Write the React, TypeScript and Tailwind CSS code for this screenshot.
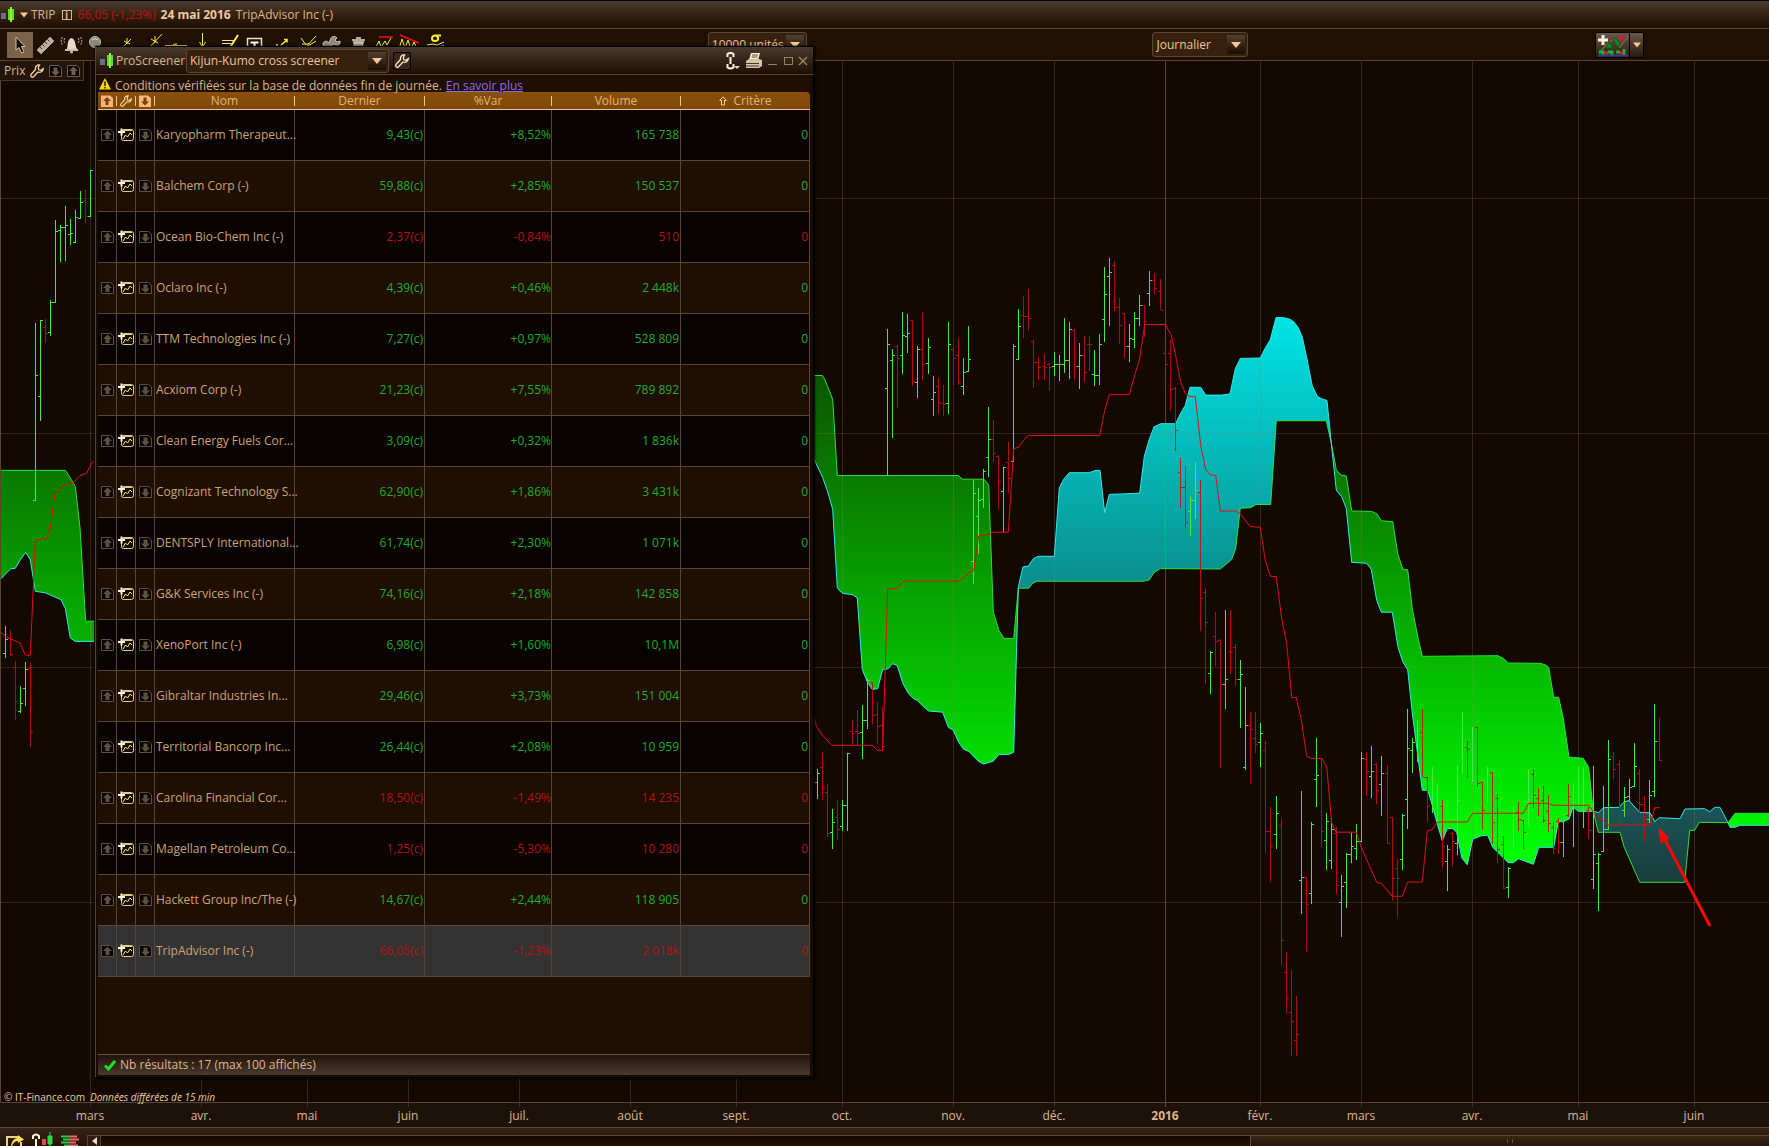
import * as React from 'react';

type Row = {
    name: string;
    last: string;
    change: string;
    volume: string;
    down?: boolean;
    selected?: boolean;
};

const rows: Row[] = [
    { name: 'Karyopharm Therapeut...', last: '9,43(c)', change: '+8,52%', volume: '165 738' },
    { name: 'Balchem Corp (-)', last: '59,88(c)', change: '+2,85%', volume: '150 537' },
    { name: 'Ocean Bio-Chem Inc (-)', last: '2,37(c)', change: '-0,84%', volume: '510', down: true },
    { name: 'Oclaro Inc (-)', last: '4,39(c)', change: '+0,46%', volume: '2 448k' },
    { name: 'TTM Technologies Inc (-)', last: '7,27(c)', change: '+0,97%', volume: '528 809' },
    { name: 'Acxiom Corp (-)', last: '21,23(c)', change: '+7,55%', volume: '789 892' },
    { name: 'Clean Energy Fuels Cor...', last: '3,09(c)', change: '+0,32%', volume: '1 836k' },
    { name: 'Cognizant Technology S...', last: '62,90(c)', change: '+1,86%', volume: '3 431k' },
    { name: 'DENTSPLY International...', last: '61,74(c)', change: '+2,30%', volume: '1 071k' },
    { name: 'G&K Services Inc (-)', last: '74,16(c)', change: '+2,18%', volume: '142 858' },
    { name: 'XenoPort Inc (-)', last: '6,98(c)', change: '+1,60%', volume: '10,1M' },
    { name: 'Gibraltar Industries In...', last: '29,46(c)', change: '+3,73%', volume: '151 004' },
    { name: 'Territorial Bancorp Inc...', last: '26,44(c)', change: '+2,08%', volume: '10 959' },
    { name: 'Carolina Financial Cor...', last: '18,50(c)', change: '-1,49%', volume: '14 235', down: true },
    { name: 'Magellan Petroleum Co...', last: '1,25(c)', change: '-5,30%', volume: '10 280', down: true },
    { name: 'Hackett Group Inc/The (-)', last: '14,67(c)', change: '+2,44%', volume: '118 905' },
    { name: 'TripAdvisor Inc (-)', last: '66,05(c)', change: '-1,23%', volume: '2 018k', down: true, selected: true },
];

// The series is stored in segments, each with its own origin and scale
type Segment = { x: number; y: number; ky: number };
const A: Segment = { x: 0, y: 160, ky: 2.613 };
const B: Segment = { x: 800, y: 240, ky: 2.45 };
const C: Segment = { x: 1150, y: 280, ky: 2.45 };
const D: Segment = { x: 1400, y: 640, ky: 3 };
const E: Segment = { x: 1200, y: 780, ky: 3 };

const px = (s: Segment, x: number) => Math.round((s.x + x / 3) * 10) / 10;
const py = (s: Segment, y: number) => Math.round((s.y + y / s.ky) * 10) / 10;

const line = (s: Segment, data: string) =>
    data
        .split(' ')
        .map((p) => {
            const [x, y] = p.split(',').map(Number);
            return `${px(s, x)},${py(s, y)}`;
        })
        .join(' ');

// high, low, open tick on the left, close tick on the right
const bars = (s: Segment, data: string) =>
    data
        .split(' ')
        .map((b) => {
            const [x, hi, lo, open, close] = b.split(',').map(Number);
            const cx = Math.floor(px(s, x)) + 0.5;
            let d = `M${cx} ${py(s, hi)}V${py(s, lo)}`;
            if (open) d += `M${cx - 2.5} ${Math.floor(py(s, open)) + 0.5}h2.5`;
            if (close) d += `M${cx} ${Math.floor(py(s, close)) + 0.5}h2.5`;
            return d;
        })
        .join('');

const upBars = [
    bars(A, '106,427,891,889,563 121,417,682,618,419 151,366,459,451,372 166,157,372,372,187 181,170,266,184,176 196,119,264,176,170 211,154,223,194,192 226,131,216,215,150 241,82,154,153,110 271,26,147,147,26 16,1218,1300,1290,1252 61,1375,1446,1441,1420 76,1312,1427,1380,1330'),
    bars(B, '52,1295,1370,1328,1308 97,1395,1493,1452,1427 127,1373,1448,1438,1386 142,1257,1447,1386,1257 187,1138,1271,1206,1178 202,1073,1197,1178,1080 262,217,577,364,255 277,268,484,296,282 307,177,327,283,234 322,182,276,236,229 352,260,387,348,268 385,239,327,302,263 400,332,430,391,373 445,201,427,400,256 490,290,379,360,325 505,211,322,322,293 520,587,842,787,620 535,608,768,677,638 550,560,657,635,568 565,409,580,533,488 610,556,716,616,558 640,255,544,542,262 655,170,293,292,212 763,275,332,310,305 778,282,346,305,305 793,192,325,305,295 808,202,340,296,220 838,252,364,310,282 883,270,358,330,333 898,230,355,333,255 913,67,250,195,134 928,43,210,90,80 988,206,299,262,240 1003,177,265,243,193 1018,135,210,192,160 1048,76,162,130,98'),
    bars(C, '121,530,627,567,540 136,447,586,540,515 181,910,1013,963,912 226,808,1051,992,978 271,932,1098,978,966 286,996,1201,1195,1091 331,1085,1192,1133,1110 379,1264,1393,1358,1306 499,1122,1290,1223,1215 634,1156,1376,1376,1172 664,1142,1268,1217,1205 694,1166,1312,1235,1208 772,1051,1346,1272,1148 787,1122,1207,1152,1133'),
    bars(E, '304,32,402,300,292 334,127,372,341,133 379,100,269,181,125 394,115,266,241,148 424,285,471,368,319 439,220,384,307,223 454,160,248,223,199 469,132,240,205,185 607,101,269,238,105'),
    bars(D, '52,240,365 97,382,520 112,430,545 142,615,752,663,628 172,375,645,610,480 187,217,400 218,260,425 263,382,490 325,682,773,742,685 340,500,620 385,388,560 490,545,650,608,540 520,430,620 535,380,500 550,380,563 580,377,747,718,642 596,640,812,670,642 610,437,635,635,568 625,300,570,568,357 673,440,530,512,472 687,416,485,470,442 703,310,442,440,380 748,420,550,537,465 763,193,470,455,304'),
].join('');

const downBars = [
    bars(A, '136,415,478,437,453 256,77,165,108,147 31,1228,1295,1250,1293 46,1310,1462,1325,1415 91,1315,1533,1328,1493'),
    bars(B, '67,1254,1371,1293,1342 82,1332,1463,1353,1455 112,1373,1470,1415,1445 157,1175,1235,1204,1208 172,1152,1237,1205,1208 217,1082,1186,1085,1165 232,1132,1235,1162,1192 247,1144,1251,1190,1240 292,256,411,260,290 337,196,358,198,346 367,177,342,268,306 415,338,426,360,398 430,355,430,400,402 460,265,356,268,290 475,241,356,282,350 580,442,545,488,523 595,527,658,530,592 625,495,620,545,583 670,136,239,185,187 685,119,224,188,192 700,246,363,248,300 715,287,342,300,312 733,280,343,310,312 748,302,371,305,312 823,217,340,222,310 853,235,349,282,325 868,235,322,255,255 943,52,174,62,165 958,142,255,165,210 973,178,289,180,262 1033,158,237,160,200 1063,80,131,100,118 1081,95,172,125,172'),
    bars(C, '46,109,257,180,208 61,148,321,180,267 76,263,418,265,368 91,436,558,471,508 106,456,608,508,594 151,490,860,520,780 166,755,990,765,838 196,814,946,873,885 211,880,1195,882,992 241,808,965,910,912 256,892,994,900,978 301,1058,1235,1092,1102 316,1058,1158,1122,1138 346,1130,1403,1152,1350 361,1292,1475,1350,1387 514,1170,1388,1172,1350 649,1157,1263,1175,1205 679,1184,1283,1187,1250 712,1187,1382,1208,1380'),
    bars(E, '245,113,555,137,482 260,516,698,577,656 275,570,827,698,724 290,648,827,782,764 319,290,515,292,374 409,140,343,160,317 577,110,362,112,295 592,238,412,265,295'),
    bars(D, '67,208,410,278,412 82,410,545,412,500 127,481,682,500,620 157,575,682,580,605 202,303,413,322,328 232,262,440,262,430 248,427,570,428,510 278,397,612,398,548 292,462,668,475,628 310,587,747,612,745 355,487,572,517,538 370,540,626,541,577 400,387,505,403,467 415,445,528,475,490 430,438,548,480,540 446,465,577,513,550 460,545,643,562,625 475,535,643,545,608 506,432,530,525,470 566,500,598,510,570 640,337,418,350,388 658,360,550,372,545 719,388,520,400,493 734,467,607,493,555 778,233,362,304,362'),
].join('');

const reverse = (pts: string) => pts.split(' ').reverse().join(' ');

// Senkou span B (green line) and span A (cyan line)
const leftB = line(A, '3,811 196,811 205,822 226,853 240,960 257,1205 282,1205');
const leftA = line(A, '3,1094 32,1068 46,1067 61,1045 77,1025 91,1045 106,1127 136,1131 183,1149 196,1172 211,1249 226,1258 282,1258');

const b1 = line(B, '41,332 67,332 74,341 82,357 98,390 112,577 475,577 487,586 552,586 566,600 580,912 597,957 612,976 641,976 655,853');
const a1 = line(B, '41,535 67,580 82,614 98,660 112,852 118,859 130,866 158,869 172,877 187,1052 202,1083 217,1101 233,1099 248,1052 263,1051 278,1038 292,1043 308,1085 325,1111 340,1123 352,1128 370,1143 386,1154 428,1157 445,1194 460,1201 475,1229 490,1247 508,1254 535,1277 550,1284 580,1277 596,1261 628,1260 641,1255 655,853');

const a2 =
    line(B, '655,853 659,835 669,801 685,799 700,781 714,775 763,775 778,607 792,585 808,570 868,570 885,565 900,564 914,668 928,623 970,622 1019,620 1033,530 1048,488 1062,458 1082,450 1127,450 1141,426 1156,405') +
    ' ' +
    line(C, '120,263 152,263 167,282 215,282 240,279 256,217 271,192 331,191 345,168 361,146 378,92 400,92 420,96 432,103 445,117 457,140 470,190 487,260 502,285 515,291 531,295 544,400');
const b2 =
    line(B, '655,853 686,853 699,840 712,836 1030,836 1047,833 1062,815 1081,805') +
    ' ' +
    line(C, '211,708 245,685 257,658 271,559 302,558 318,550 362,550 379,345 529,345 544,400');

const a3 =
    line(C, '544,400 559,515 575,531 589,560 605,692 650,694 664,709 680,785 694,814 727,814 744,900 758,935 773,955') +
    ' ' +
    line(D, '37,220 67,451 83,451 98,500 112,553 127,602 142,565 158,566 170,577 186,655 202,674 218,597 245,587 263,586 278,622 325,668 340,668 356,656 400,673 416,622 461,622 475,545 490,545 507,537 519,501 535,514 580,514');
const b3 =
    line(C, '544,400 559,465 573,478 589,480 605,566 665,567 681,573 694,590 728,592 743,670 758,708 773,710 787,805 805,880 817,922') +
    ' ' +
    line(D, '294,47 310,55 325,69 420,70 435,74 446,82 461,172 476,172 490,235 507,351 550,355 566,382 580,514');

const a4 = line(D, '580,514 596,518 610,503 658,502 673,485 687,482 719,517 750,518 764,545 778,533 840,536 855,507 914,506 929,515 945,502 960,502 984,548');
const b4 = line(D, '580,514 595,577 660,577 672,620 719,727 854,727 869,571 884,571 898,547 984,548');

const a5 = line(D, '984,548 990,562 1005,562 1020,556 1107,556');
const b5 = line(D, '984,548 1005,520 1107,520');

const kijun = [
    line(A, '0,1232 20,1247 60,1262 76,1294 91,1294 106,998 112,992 140,990 151,965 166,865 175,863 190,850 220,843 240,825 260,818 275,792 282,788'),
    line(B, '41,1168 50,1193 68,1214 96,1238 217,1238 233,1251 248,1251 263,855 293,853 310,836 476,836 505,816 521,810 536,725 565,721 576,716 625,716 641,511 656,508 671,490 686,479 899,479 914,418 928,379 988,379 1003,334 1018,295 1034,207 1096,207') +
        ' ' +
        line(C, '64,135 76,180 92,250 106,278 120,286 136,286 152,405 167,465 180,477 197,479 211,566 257,566 271,573 300,604 331,606 346,687 361,726 379,727 395,830 410,890 425,1023 439,1023 454,1078 470,1167 485,1172 515,1172 530,1192 545,1330 559,1353 619,1353 634,1390 680,1476 694,1478 727,1510 757,1510 773,1475 817,1475 832,1349 847,1347 862,1328 952,1328') +
        ' ' +
        line(D, '218,520 370,520 386,490 446,490 460,496 566,496 580,515 625,555 750,555 764,503 780,503'),
];

const months = [
    { x: 90, label: 'mars' },
    { x: 201, label: 'avr.' },
    { x: 307, label: 'mai' },
    { x: 408, label: 'juin' },
    { x: 519, label: 'juil.' },
    { x: 630, label: 'août' },
    { x: 736, label: 'sept.' },
    { x: 842, label: 'oct.' },
    { x: 953, label: 'nov.' },
    { x: 1054, label: 'déc.' },
    { x: 1165, label: '2016', year: true },
    { x: 1260, label: 'févr.' },
    { x: 1361, label: 'mars' },
    { x: 1472, label: 'avr.' },
    { x: 1578, label: 'mai' },
    { x: 1694, label: 'juin' },
];

function PriceChart() {
    return (
        <svg className="absolute inset-0 h-full w-full" viewBox="0 61 1769 1066" preserveAspectRatio="none" role="img" aria-label="TRIP">
            <defs>
                <linearGradient id="kumoGreen" gradientUnits="userSpaceOnUse" x1="0" y1="370" x2="0" y2="860">
                    <stop offset="0" stopColor="#0c5500" />
                    <stop offset="1" stopColor="#00ff00" />
                </linearGradient>
                <linearGradient id="kumoCyan" gradientUnits="userSpaceOnUse" x1="0" y1="317" x2="0" y2="883">
                    <stop offset="0" stopColor="#00e4e4" />
                    <stop offset="0.46" stopColor="#0a9090" />
                    <stop offset="0.86" stopColor="#1b5559" />
                    <stop offset="1" stopColor="#183c3a" />
                </linearGradient>
            </defs>

            <rect x="0" y="1103" width="1769" height="24" fill="#1d120a" />

            <g fill="url(#kumoGreen)">
                <polygon points={`${leftB} ${reverse(leftA)}`} />
                <polygon points={`${b1} ${reverse(a1)}`} />
                <polygon points={`${b3} ${reverse(a3)}`} />
                <polygon points={`${b5} ${reverse(a5)}`} />
            </g>
            <g fill="url(#kumoCyan)">
                <polygon points={`${a2} ${reverse(b2)}`} />
                <polygon points={`${a4} ${reverse(b4)}`} />
            </g>

            <g stroke="#a08060" strokeOpacity="0.2" shapeRendering="crispEdges">
                {[198.5, 433.5, 667.5, 902.5].map((y) => (
                    <line key={y} x1="1" x2="1769" y1={y} y2={y} />
                ))}
                {months.map((m) => (
                    <line key={m.x} x1={m.x + 0.5} x2={m.x + 0.5} y1="61" y2="1107" strokeOpacity={m.year ? 0.5 : 0.26} />
                ))}
            </g>

            <g fill="none" stroke="#2ee02e">
                <polyline points={leftB} />
                <polyline points={b1} />
                <polyline points={b2} />
                <polyline points={b3} />
                <polyline points={b4} />
                <polyline points={b5} />
            </g>
            <g fill="none" stroke="#30e8e8">
                <polyline points={leftA} />
                <polyline points={a1} />
                <polyline points={a2} />
                <polyline points={a3} />
                <polyline points={a4} />
                <polyline points={a5} />
            </g>

            <path d={upBars} fill="none" stroke="#3eee3e" shapeRendering="crispEdges" />
            <path d={downBars} fill="none" stroke="#cc0c0c" strokeOpacity="0.88" shapeRendering="crispEdges" />
            <g fill="none" stroke="#e80c0c">
                {kijun.map((k, i) => (
                    <polyline key={i} points={k} />
                ))}
            </g>

            <g fill="#fb0505" stroke="#fb0505">
                <line x1="1663" y1="836" x2="1710" y2="926" strokeWidth="3" />
                <polygon points="1659,828 1669,838 1661,843" />
            </g>

            <path d="M0.5 61V1102M0 1102.5H1769" stroke="#5c452e" shapeRendering="crispEdges" />
            <g fill="#dcb68c" fontSize="12" textAnchor="middle">
                {months.map((m) => (
                    <text key={m.x} x={m.x} y="1120" fontWeight={m.year ? 700 : 400}>
                        {m.label}
                    </text>
                ))}
            </g>
        </svg>
    );
}

const CandleIcon = () => (
    <svg className="h-4 w-4 shrink-0" viewBox="0 0 16 16" shapeRendering="crispEdges">
        <rect x="1" y="6" width="5" height="6" fill="#66708c" />
        <rect x="8" y="2" width="6" height="11" fill="#62dc10" />
        <rect x="10" y="0" width="2" height="15" fill="#8cf03c" />
    </svg>
);

const PageArrowIcon = ({ down, page, arrow }: { down?: boolean; page: string; arrow: string }) => (
    <svg className="mx-auto h-3 w-[13px] shrink-0" viewBox="0 0 13 12">
        <path d="M.5.5H9.500L12.500 3V11.500H.5Z" fill={page} stroke={arrow} />
        <path d={down ? 'M6.500 11L11 6.500H8.500V2.500H4.500V6.500H2Z' : 'M6.500 1.500L11 6H8.500V10H4.500V6H2Z'} fill={arrow} />
    </svg>
);

// Column heads use the same page, filled, with the arrow cut out
const HeadPageIcon = ({ down }: { down?: boolean }) => (
    <svg className="mx-auto h-3 w-3 shrink-0" viewBox="0 0 12 12">
        <path d="M0 .5H9L12 3V12H0Z" fill="#f4b47c" />
        <path d={down ? 'M6 10.500L10 6.500H7.500V2.500H4.500V6.500H2Z' : 'M6 2L10 6H7.500V10H4.500V6H2Z'} fill="#7c4004" />
    </svg>
);

const AddChartIcon = () => (
    <svg className="h-3.5 w-4" viewBox="0 0 16 14" fill="none">
        <rect x="3.500" y="1.500" width="12" height="11" rx="2" fill="#140b02" stroke="#e0cc84" />
        <path d="M5 2.500h9" stroke="#e0cc84" />
        <path d="M5 11L7.500 7L9.500 9L12 5L14 7" stroke="#fff06c" />
        <path d="M0 4h7M3.500 0.500v7" stroke="#fff4e0" strokeWidth="2" />
    </svg>
);

const WrenchIcon = ({ className }: { className?: string }) => (
    <svg className={`shrink-0 ${className ?? 'h-3.5 w-3.5'}`} viewBox="0 0 14 14" fill="none" stroke="currentColor" strokeWidth="1.300">
        <path d="M9.500 1C7 .7 5 2.500 5.500 5.500L1 10.500C0 12 2 14 3.500 12.800L8 8C10.500 9 13 7.500 13.300 4.500L11 6.300L8.800 5.800L8.300 3.500Z" />
    </svg>
);

const Caret = ({ className }: { className?: string }) => (
    <svg className={`h-1.5 ${className ?? 'w-2.5'}`} viewBox="0 0 10 6">
        <path d="M0 0H10L5 6Z" fill="#f4c896" />
    </svg>
);

const tools: { label: string; art: React.ReactNode }[] = [
    {
        label: 'Pointeur',
        art: <path d="M9 5V18L12 15.500L14.500 21L17 20L14.500 14.500H18Z" fill="#0c0805" stroke="#d8c4a4" />,
    },
    {
        label: 'Règle',
        art: (
            <g>
                <path d="M4 18L17 5L21 9L8 22Z" fill="#b8b0a0" stroke="#d8d0c0" strokeWidth=".5" />
                <path d="M7 15l2 2M9.500 12.500l2 2M12 10l2 2M14.500 7.500l2 2" stroke="#3a2c20" />
            </g>
        ),
    },
    {
        label: 'Alarme',
        art: (
            <g>
                <path d="M8 17C9 14 8 7 12.500 6C17 7 16 14 18 17H7Z" fill="#e4dccb" />
                <path d="M6 18h13" stroke="#fff8e8" strokeWidth="1.500" />
                <circle cx="12.500" cy="20" r="1.500" fill="#d0b890" />
                <path d="M6 6Q4 9 6 11M3.500 5Q1 9 3.500 13M19 6Q21 9 19 11M21.500 5Q24 9 21.500 13" stroke="#c8bca4" strokeDasharray="2 1" />
            </g>
        ),
    },
    {
        label: 'Loupe',
        art: (
            <g>
                <circle cx="10" cy="10" r="5.500" fill="#8e8878" stroke="#c0b8a8" />
                <path d="M7 8Q10 5 13 8" stroke="#e4e0d0" />
            </g>
        ),
    },
    { label: 'Segment', art: <path d="M11 16L20 7M13 9l6 3M16 6v6" stroke="#f4ee30" /> },
    { label: 'Droite', art: <path d="M11 17L25 2M14 7l7 4M18 4v7" stroke="#f4ee30" /> },
    { label: 'Horizontale', art: <path d="M2 13.500H24M13 11v5M10 12l6 3" stroke="#f4ee30" /> },
    { label: 'Verticale', art: <path d="M13.500 1V16M10.500 10l3 5L16.500 10" stroke="#f4ee30" /> },
    {
        label: 'Note',
        art: (
            <g>
                <path d="M7 8.500h12M7 11.500h9M7 14.500h7" stroke="#f0e090" />
                <path d="M14 17L23 3" stroke="#fff450" strokeWidth="2" />
            </g>
        ),
    },
    {
        label: 'Texte',
        art: (
            <g>
                <path d="M6.500 20V6.500H20.500V20" stroke="#f4e0c0" strokeWidth="1.500" />
                <path d="M9.500 10.500h8M13.500 10v8" stroke="#fff" strokeWidth="2" />
            </g>
        ),
    },
    { label: 'Fibonacci', art: <path d="M10 12v3h4M14 13L20 8M17 7.500h3v3" stroke="#f4ee30" strokeWidth="1.500" /> },
    { label: 'Fourchette', art: <path d="M8 6L13 13M11 17L23 4M15 14L23 9M9 12h8" stroke="#f4ee30" /> },
    {
        label: 'Réglages',
        art: (
            <path d="M4 12C4 9 8 8 10 11L12 6C13 4 17 4 18 6L16 8L18 10L21 9C22 13 18 14 15 12L11 14C8 17 4 15 4 12Z" fill="#8f887c" stroke="#c8c0b0" />
        ),
    },
    {
        label: 'Corbeille',
        art: (
            <g>
                <path d="M7 8H20M8 10H19M11 6h5" stroke="#e4dccb" strokeWidth="1.500" />
                <path d="M9 11L10 20H17L18 11Z" fill="#9a9282" stroke="#d8d0c0" />
            </g>
        ),
    },
    {
        label: 'Supports',
        art: (
            <g>
                <path d="M4 17L8 9L10 15L14 9L16 13L20 6" stroke="#f4ee30" />
                <path d="M8 5H22" stroke="#f01010" strokeWidth="1.500" />
            </g>
        ),
    },
    {
        label: 'Canaux',
        art: (
            <g>
                <path d="M2 17L5 7L8 16L11 8L14 17L17 10L20 17" stroke="#f4ee30" />
                <path d="M3 3L22 11" stroke="#f01010" strokeWidth="1.500" />
            </g>
        ),
    },
    {
        label: 'Écart type',
        art: (
            <g>
                <path d="M18 3.500H12C8 4 8 9 12 9C16 9 16 5 13 4" stroke="#fff020" strokeWidth="2" />
                <path d="M4 13L10 12L14 13L21 10" stroke="#fff450" />
                <path d="M4 17L11 14L15 16L21 13" stroke="#c8c0b0" />
            </g>
        ),
    },
];

function DropDown(props: { label: string; value: string; className?: string }) {
    return (
        <span className={`relative block ${props.className ?? ''}`}>
            <select
                aria-label={props.label}
                className="h-full w-full appearance-none rounded-[3px] border border-[#5a4530] bg-[#38200f] pl-[3px] text-[12px] leading-4 text-[#eec498] outline-none"
            >
                <option>{props.value}</option>
            </select>
            <span className="pointer-events-none absolute inset-y-[3px] right-[3px] flex w-[18px] items-center justify-center bg-linear-to-b from-[#54402f] to-[#1c0d03]">
                <Caret />
            </span>
        </span>
    );
}

function ScreenerWindow() {
    return (
        <section className="absolute top-[45px] left-[95px] z-10 w-[718px] border-t border-l border-t-black border-l-[#55432f] bg-[#180b02] pb-0.5 shadow-[1px_1px_2px_1px_#000]">
            <header className="flex h-7 items-center border-b border-[#58422c] bg-linear-to-b from-[#4a392d] to-[#1e0f04] pr-[5px] pl-[3px]">
                <CandleIcon />
                <h2 className="ml-px w-[70px] text-[12px] text-[#dcb68c]">ProScreener</h2>
                <DropDown label="Screener" value="Kijun-Kumo cross screener" className="h-[24px] w-[203px]" />
                <button aria-label="Configurer" className="ml-1 flex h-[18px] w-[18px] items-center justify-center rounded-xs border border-black bg-[#38271a] text-[#ffe8c4]">
                    <WrenchIcon />
                </button>
                <div className="ml-auto flex items-center gap-[5px] text-[#9a8064]">
                    <button aria-label="Lier">
                        <svg className="h-[18px] w-3.5" viewBox="0 0 14 18" fill="none">
                            <path d="M1.500 5V2Q4.500 0 7.500 2V5M1.500 12V15.500Q4.500 17.500 7.500 15.500V12M4.500 5V12" stroke="#fff4dc" strokeWidth="2" />
                            <path d="M8 14H14L11 17Z" fill="#ecd4ac" />
                        </svg>
                    </button>
                    <button aria-label="Imprimer">
                        <svg className="h-[18px] w-[18px]" viewBox="0 0 18 18">
                            <path d="M6 1H15L13 8H4Z" fill="#fff0d8" />
                            <path d="M7 3h6M6.500 5h6" stroke="#5a4430" />
                            <path d="M1 9L4 7H14L17 8V14L14 16H1Z" fill="#d8c4a4" />
                            <path d="M1 11.500H14M1 14H14" stroke="#4a3828" />
                        </svg>
                    </button>
                    <button aria-label="Réduire">
                        <svg className="h-2.5 w-2.5" viewBox="0 0 10 10">
                            <path d="M0 8.500H9" stroke="currentColor" />
                        </svg>
                    </button>
                    <button aria-label="Agrandir">
                        <svg className="h-2.5 w-2.5" viewBox="0 0 10 10" fill="none">
                            <path d="M1.500 1V8.500H9.500V1M1 1.500H10" stroke="currentColor" />
                        </svg>
                    </button>
                    <button aria-label="Fermer">
                        <svg className="h-2.5 w-2.5" viewBox="0 0 10 10">
                            <path d="M1 1L9 9M9 1L1 9" stroke="currentColor" strokeWidth="1.500" />
                        </svg>
                    </button>
                </div>
            </header>

            <div className="pr-[3px] pl-0.5">
                <p className="flex h-[17px] items-center bg-[#1f0f02] pt-[5px] text-[12px] whitespace-nowrap text-[#dcb68c]">
                    <svg className="mr-1 mb-1 ml-px h-3 w-3 shrink-0" viewBox="0 0 12 12">
                        <path d="M6 0L12 11.500H0Z" fill="#ffd800" />
                        <path d="M6 3.500V8M6 9v1.500" stroke="#201000" strokeWidth="1.500" />
                    </svg>
                    Conditions vérifiées sur la base de données fin de journée.
                    <a href="#savoir" className="ml-1 text-[#8c6ce8] underline">
                        En savoir plus
                    </a>
                </p>

                <table className="w-full table-fixed border-separate border-spacing-0 bg-[#1f0f02] text-[12px] leading-4">
                    <colgroup>
                        <col className="w-[19px]" />
                        <col className="w-[19px]" />
                        <col className="w-[19px]" />
                        <col className="w-[140px]" />
                        <col className="w-[130px]" />
                        <col className="w-[127px]" />
                        <col className="w-[129px]" />
                        <col className="w-[129px]" />
                    </colgroup>
                    <thead>
                        <tr className="text-[#e6b27c]">
                            <Th>
                                <HeadPageIcon />
                            </Th>
                            <Th>
                                <WrenchIcon className="h-3 w-3 text-[#ffd8a4]" />
                            </Th>
                            <Th>
                                <HeadPageIcon down />
                            </Th>
                            <Th>Nom</Th>
                            <Th>Dernier</Th>
                            <Th>%Var</Th>
                            <Th>Volume</Th>
                            <Th last>
                                <svg className="mr-1.5 h-2.5 w-2" viewBox="0 0 8 10" fill="none">
                                    <path d="M4 .8L7.300 4.500H5.500V9H2.500V4.500H.7Z" stroke="#ffd09c" />
                                </svg>
                                Critère
                            </Th>
                        </tr>
                    </thead>
                    <tbody>
                        {rows.map((r) => (
                            <tr
                                key={r.name}
                                className={`${r.selected ? 'bg-[#333333]' : 'odd:bg-[#080301] even:bg-[#1f0f02]'} ${r.down ? 'text-[#b41212]' : 'text-[#22ac26]'} [&>td]:h-[51px] [&>td]:border-r [&>td]:border-b [&>td]:border-[#5c452e] [&>td]:p-0`}
                            >
                                <td>
                                    <PageArrowIcon page="#060300" arrow="#5c5040" />
                                </td>
                                <td>
                                    <span className="flex justify-center">
                                        <AddChartIcon />
                                    </span>
                                </td>
                                <td>
                                    <PageArrowIcon down page="#060300" arrow="#5c5040" />
                                </td>
                                <td className="whitespace-nowrap text-[#cfa273]">
                                    <span className="ml-px">{r.name}</span>
                                </td>
                                <td className="text-right">
                                    <span className="mr-px">{r.last}</span>
                                </td>
                                <td className="text-right">{r.change}</td>
                                <td className="text-right">
                                    <span className="mr-px">{r.volume}</span>
                                </td>
                                <td className="text-right">
                                    <span className="mr-px">0</span>
                                </td>
                            </tr>
                        ))}
                    </tbody>
                </table>
                <div className="h-[77px] bg-[#1f0f02]" />

                <footer className="flex h-[21px] items-center border-t border-[#6a5036] bg-linear-to-b from-[#22130a] to-[#4a392d] pl-1.5 text-[12px] text-[#dcb68c]">
                    <svg className="mr-1 h-3 w-3" viewBox="0 0 12 12" fill="none">
                        <path d="M1 6.500L4.500 10L11 2" stroke="#18e428" strokeWidth="3" />
                    </svg>
                    Nb résultats : 17 (max 100 affichés)
                </footer>
            </div>
        </section>
    );
}

function Th({ children, last }: { children: React.ReactNode; last?: boolean }) {
    return (
        <th className={`h-[18px] border-b border-[#f4c080] bg-linear-to-b from-[#8a5008] to-[#7c480c] p-0 font-normal ${last ? 'rounded-tr-sm' : ''}`}>
            <span className={`flex h-2.5 items-center justify-center ${last ? '' : 'border-r border-[#f0c48c]'}`}>{children}</span>
        </th>
    );
}

export default function App() {
    return (
        <div className="relative flex h-screen flex-col overflow-hidden border-t border-black bg-[#130900] font-['Open_Sans','Noto_Sans',sans-serif] text-[12px] leading-4 text-[#dcb68c]">
            <header className="flex h-7 items-center border-b border-[#5c452e] bg-linear-to-b from-[#4c3a34] via-[#35220f] to-[#1c0d02]">
                <CandleIcon />
                <button aria-label="Valeurs" className="ml-1">
                    <Caret className="w-2" />
                </button>
                <span className="ml-[3px]">TRIP</span>
                <span className="ml-1.5 flex h-2.5 w-2.5 items-center justify-center border border-[#dcb68c] text-[10px] font-bold">i</span>
                <span className="ml-1.5 w-[79px] whitespace-nowrap text-[#c01010]">66,05 (-1,23%)</span>
                <b className="ml-1 font-bold text-[#f0c8a0]">24 mai 2016</b>
                <span className="ml-[5px]">TripAdvisor Inc (-)</span>
            </header>

            <div className="flex h-8 items-center border-b border-[#5c452e] bg-[#201003] pl-[7px]">
                {tools.map((t, i) => (
                    <button key={t.label} aria-label={t.label} className={`h-[26px] w-[26px] shrink-0 ${i === 0 ? 'bg-[#7c624a]' : ''}`}>
                        <svg className="h-[26px] w-[26px]" viewBox="0 0 26 26" fill="none">
                            {t.art}
                        </svg>
                    </button>
                ))}
                <div className="flex-[259]" />
                <DropDown label="Nombre d'unités" value="10000 unités" className="h-[25px] w-[99px]" />
                <div className="flex-[346]" />
                <DropDown label="Unité de temps" value="Journalier" className="h-[25px] w-24" />
                <div className="flex-[347]" />
                <div className="flex h-[26px] w-[49px] rounded-xs border border-black bg-linear-to-b from-[#6a5848] to-[#2c1c10]">
                    <button aria-label="Ajouter un indicateur" className="border-r border-black">
                        <svg className="h-6 w-[33px]" viewBox="0 0 33 24" fill="none">
                            <path d="M3 20L12 10L18 6L24 14L32 3" stroke="#7c5c50" strokeWidth="1.500" />
                            <path d="M10 15L13 9L17 15ZM17 6L22 15L24 10L20 5Z" fill="#108a28" stroke="#0a5c18" />
                            <path d="M23 4l3-2 1 4-3 4Z" fill="#e01838" />
                            <path d="M3 19h4v3M12 19h4v3M20 19h4M28 16v6" stroke="#10b838" strokeWidth="3" />
                            <path d="M8 20h4M24 20h3" stroke="#d82030" strokeWidth="3" />
                            <path d="M2 22.500H32" stroke="#3c3c98" strokeWidth="2" />
                            <path d="M2 7h10M7 2v10" stroke="#f8f0e4" strokeWidth="3" />
                        </svg>
                    </button>
                    <button aria-label="Indicateurs" className="flex flex-1 items-center justify-center">
                        <Caret className="w-2" />
                    </button>
                </div>
                <div className="flex-[125]" />
            </div>

            <main className="relative flex flex-1 flex-col">
                <PriceChart />
                <div className="relative flex h-5 w-[84px] items-center gap-[5px] border-r border-b border-[#4a3826] bg-[#24150a] pl-1">
                    <span>Prix</span>
                    <button aria-label="Configurer le prix" className="text-[#f8d4a4]">
                        <WrenchIcon />
                    </button>
                    <button aria-label="Descendre">
                        <PageArrowIcon down page="#060300" arrow="#6c5c4c" />
                    </button>
                    <button aria-label="Monter">
                        <PageArrowIcon page="#060300" arrow="#6c5c4c" />
                    </button>
                </div>
                <p className="relative mt-auto mb-[22px] ml-1 flex gap-[5px] text-[10px] text-[#f0cca0]">
                    <span>© IT-Finance.com</span>
                    <i>Données différées de 15 min</i>
                </p>
            </main>

            <footer className="flex h-[19px] shrink-0 items-end gap-2 overflow-hidden border-t border-[#5c452e] bg-linear-to-b from-[#35231a] to-[#261407] pl-1.5">
                <button aria-label="Exporter" className="h-3 w-[18px]">
                    <svg className="h-3 w-[18px]" viewBox="0 0 18 12" fill="none">
                        <path d="M1 12V3H12M15 8V12" stroke="#e8d08c" strokeWidth="2" />
                        <path d="M5 12C6 6 9 4 12 4V1L18 5.500L12 9V7C9 7 7 9 6 12Z" fill="#ffe04c" />
                    </svg>
                </button>
                <button aria-label="Lier les graphiques" className="h-3.5 w-[21px]">
                    <svg className="h-3.5 w-[21px]" viewBox="0 0 21 14" fill="none">
                        <path d="M1 7V4Q4 1 7 4V7M4 7V14" stroke="#fff4dc" strokeWidth="2" />
                        <path d="M10 7h4v6h-4z" fill="#e84858" />
                        <path d="M16 4h4v8h-4zM18 0v14" fill="#28d848" stroke="#28d848" />
                    </svg>
                </button>
                <button aria-label="Carnet d'ordres" className="h-3 w-[18px]">
                    <svg className="h-3 w-[18px]" viewBox="0 0 18 12">
                        <path d="M0 2.500H9M2 5.500H9M0 8.500H9M3 11.500H9" stroke="#28c848" strokeWidth="2" />
                        <path d="M9 2.500H16M9 5.500H18M9 8.500H15M9 11.500H17" stroke="#f06868" strokeWidth="2" />
                    </svg>
                </button>
                <div className="flex h-[11px] flex-1 border-t border-[#5c452e] bg-linear-to-b from-[#140800] to-[#241206]">
                    <button aria-label="Défiler à gauche" className="flex w-3.5 items-center justify-center border-x border-[#5c452e] bg-[#2c1a0e]">
                        <svg className="h-2 w-1.5" viewBox="0 0 6 8">
                            <path d="M6 0V8L1 4Z" fill="#f4dcc0" />
                        </svg>
                    </button>
                    <div className="flex-[1150]" />
                    <div className="flex flex-[519] items-center justify-center border-l border-[#6a5036] bg-linear-to-b from-[#3a2614] to-[#24140a]">
                        <span className="h-1 w-1.5 border-x border-[#6a5036]" />
                    </div>
                </div>
            </footer>

            <ScreenerWindow />
        </div>
    );
}
